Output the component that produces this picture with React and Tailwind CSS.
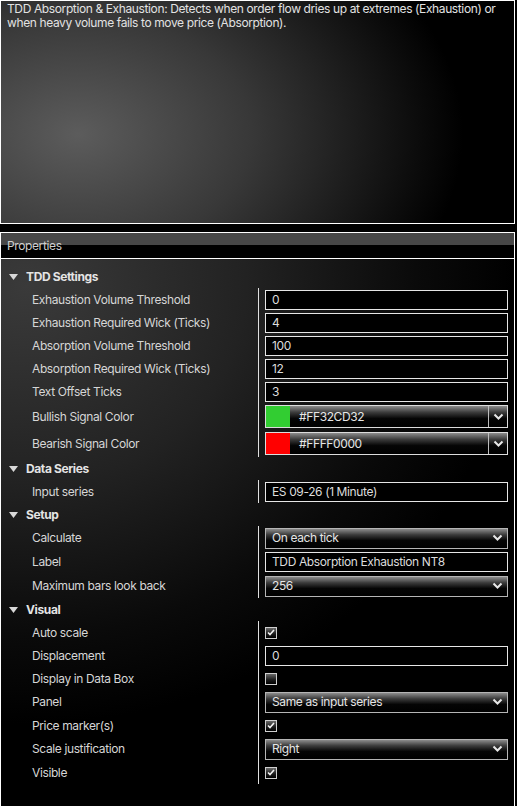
import React from 'react';

const font = { fontFamily: 'Inter, "Noto Sans", sans-serif', letterSpacing: '-0.38px' };

const Chevron = () => (
  <svg width="11" height="8" viewBox="0 0 11 8" className="shrink-0">
    <path d="M1.5 1.5 L5.5 5.5 L9.5 1.5" fill="none" stroke="#e8e8e8" strokeWidth="2" />
  </svg>
);

const Caret = () => (
  <svg width="9" height="6" viewBox="0 0 9 6" className="shrink-0">
    <path d="M0 0 H9 L4.5 6 Z" fill="#d8d8d8" />
  </svg>
);

const TextBox = ({ value }) => (
  <div className="h-[20px] w-full bg-black border border-[#e6e6e6] flex items-center pl-[6px] text-[12px] text-[#dcdcdc]">
    {value}
  </div>
);

const Dropdown = ({ value }) => (
  <div className="h-[21px] w-full border border-[#b5b5b5] bg-[linear-gradient(to_bottom,#8c8c8c_0%,#3c3c3c_30%,#050505_60%,#000_100%)] flex items-center justify-between pl-[6px] pr-[4px] text-[12px] text-[#e6e6e6]">
    <span>{value}</span>
    <Chevron />
  </div>
);

const ColorPick = ({ swatch, value }) => (
  <div className="h-[23px] w-full border border-[#dcdcdc] bg-[linear-gradient(to_bottom,#8c8c8c_0%,#3c3c3c_30%,#050505_60%,#000_100%)] flex items-stretch text-[12px] text-[#e6e6e6]">
    <div className="w-[24px]" style={{ background: swatch }} />
    <div className="flex-1 flex items-center pl-[9px]">{value}</div>
    <div className="w-[19px] border-l border-[#bdbdbd] flex items-center justify-center">
      <Chevron />
    </div>
  </div>
);

const Check = ({ on }) => (
  <div className="w-[12px] h-[12px] border border-[#cfcfcf] bg-[linear-gradient(to_bottom,#6a6a6a_0%,#1a1a1a_60%,#000_100%)] flex items-center justify-center">
    {on && (
      <svg width="8" height="7" viewBox="0 0 8 7">
        <path d="M1 3.5 L3 5.5 L7 1" fill="none" stroke="#f2f2f2" strokeWidth="1.6" />
      </svg>
    )}
  </div>
);

const Row = ({ label, h = 'h-[23px]', children }) => (
  <div className={`flex ${h}`}>
    <div className="w-[257px] shrink-0 flex items-center pl-[31px] text-[12px] text-[#d6d6d6]">{label}</div>
    <div className="flex-1 border-l border-[#e0e0e0] flex items-center pl-[6px] pr-[6px]">{children}</div>
  </div>
);

const Group = ({ title, children }) => (
  <div>
    <div className="h-[23px] flex items-center gap-[8px] pl-[8px] text-[12px] font-bold text-[#e4e4e4]">
      <Caret />
      <span>{title}</span>
    </div>
    {children}
  </div>
);

export default function App() {
  return (
    <div className="w-[517px] h-[806px] bg-black overflow-hidden" style={font}>
      <div className="w-[515px] h-[224px] border border-white bg-[radial-gradient(ellipse_75%_120%_at_15%_60%,#5c5c5c_0%,#383838_45%,#0c0c0c_88%,#000_100%)] pl-[6px] pr-[2px] pt-[1px] text-[12px] leading-[14px] text-[#e2e2e2]">
        TDD Absorption &amp; Exhaustion: Detects when order flow dries up at extremes (Exhaustion) or when heavy volume fails to move price (Absorption).
      </div>

      <div className="mt-[8px] w-[515px] h-[574px] border-l border-t border-r border-white flex flex-col">
        <div className="h-[26px] shrink-0 bg-[linear-gradient(to_bottom,#474747_50%,#000_50%)] flex items-center pl-[6px] text-[12px] text-[#cfcfcf] border-b border-white">
          Properties
        </div>
        <div className="flex-1 pt-[6px] bg-[radial-gradient(ellipse_95%_80%_at_5%_5%,#3a3a3a_0%,#222_45%,#0a0a0a_80%,#000_100%)]">
          <Group title="TDD Settings">
            <Row label="Exhaustion Volume Threshold"><TextBox value="0" /></Row>
            <Row label="Exhaustion Required Wick (Ticks)"><TextBox value="4" /></Row>
            <Row label="Absorption Volume Threshold"><TextBox value="100" /></Row>
            <Row label="Absorption Required Wick (Ticks)"><TextBox value="12" /></Row>
            <Row label="Text Offset Ticks"><TextBox value="3" /></Row>
            <Row label="Bullish Signal Color" h="h-[27px]"><ColorPick swatch="#32cd32" value="#FF32CD32" /></Row>
            <Row label="Bearish Signal Color" h="h-[27px]"><ColorPick swatch="#ff0000" value="#FFFF0000" /></Row>
          </Group>
          <Group title="Data Series">
            <Row label="Input series"><TextBox value="ES 09-26 (1 Minute)" /></Row>
          </Group>
          <Group title="Setup">
            <Row label="Calculate" h="h-[24px]"><Dropdown value="On each tick" /></Row>
            <Row label="Label" h="h-[24px]"><TextBox value="TDD Absorption Exhaustion NT8" /></Row>
            <Row label="Maximum bars look back" h="h-[24px]"><Dropdown value="256" /></Row>
          </Group>
          <Group title="Visual">
            <Row label="Auto scale"><Check on /></Row>
            <Row label="Displacement"><TextBox value="0" /></Row>
            <Row label="Display in Data Box"><Check /></Row>
            <Row label="Panel" h="h-[24px]"><Dropdown value="Same as input series" /></Row>
            <Row label="Price marker(s)"><Check on /></Row>
            <Row label="Scale justification" h="h-[24px]"><Dropdown value="Right" /></Row>
            <Row label="Visible"><Check on /></Row>
          </Group>
        </div>
      </div>
    </div>
  );
}
